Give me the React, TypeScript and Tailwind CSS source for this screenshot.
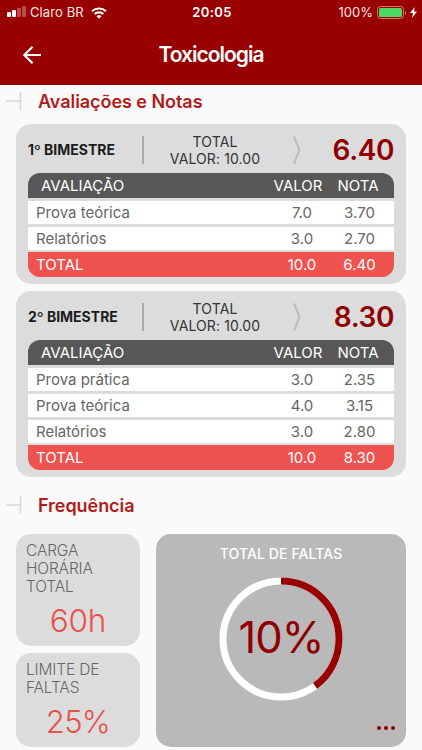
import clsx from "clsx";

type Grade = { name: string; value: string; grade: string };

type Term = {
  title: string;
  result: string;
  total: string;
  grades: Grade[];
};

const terms: Term[] = [
  {
    title: "1º BIMESTRE",
    result: "6.40",
    total: "10.0",
    grades: [
      { name: "Prova teórica", value: "7.0", grade: "3.70" },
      { name: "Relatórios", value: "3.0", grade: "2.70" },
    ],
  },
  {
    title: "2º BIMESTRE",
    result: "8.30",
    total: "10.0",
    grades: [
      { name: "Prova prática", value: "3.0", grade: "2.35" },
      { name: "Prova teórica", value: "4.0", grade: "3.15" },
      { name: "Relatórios", value: "3.0", grade: "2.80" },
    ],
  },
];

function StatusBar() {
  return (
    <div className="grid h-6 grid-cols-3 items-center pl-[7px] pr-[5px] pt-px text-[13px] text-white/90">
      <div className="flex items-center">
        <div className="mr-1 flex h-[9px] items-end gap-px">
          <span className="h-[5px] w-1 rounded-[1px] bg-white" />
          <span className="h-[7px] w-1 rounded-[1px] bg-white" />
          <span className="h-[9px] w-1 rounded-[1px] bg-white/30" />
          <span className="h-[11px] w-1 rounded-[1px] bg-white/30" />
        </div>
        <span className="tracking-[0.1px]">Claro BR</span>
        <svg className="ml-[7px]" width="16" height="12" viewBox="0 0 16 12" fill="none" stroke="white" strokeWidth="2.1">
          <path d="M1 4.3a10.2 10.2 0 0 1 14 0" />
          <path d="M3.6 7.1a6.5 6.5 0 0 1 8.8 0" />
          <path d="M8 11.8 5.5 9.2a3.7 3.7 0 0 1 5 0z" fill="white" stroke="none" />
        </svg>
      </div>
      <span className="text-center font-semibold tracking-[0.4px] text-white">20:05</span>
      <div className="flex items-center justify-end">
        <span>100%</span>
        <div className="ml-1 h-[13px] w-[27px] rounded-[3.5px] border border-[#cf7a68] p-px">
          <div className="h-full rounded-[1.5px] bg-[#4cd964]" />
        </div>
        <span className="ml-px h-1 w-px rounded-r bg-[#cf7a68]" />
        <svg className="ml-1" width="7" height="11" viewBox="0 0 7 11" fill="white">
          <path d="M4.7 0 0 6h3L2 11l5-6.5H4z" />
        </svg>
      </div>
    </div>
  );
}

function Header() {
  return (
    <header className="h-[85px] bg-[#990000]">
      <StatusBar />
      <div className="grid h-[61px] grid-cols-[60px_1fr_60px] items-center text-white">
        <svg className="ml-[23px]" width="19" height="18" viewBox="0 0 19 18" fill="none" stroke="white" strokeWidth="2.1">
          <path d="M9.6 .8 1.3 9l8.3 8.2M1.5 9H18" />
        </svg>
        <h1 className="text-center text-[21px] font-semibold tracking-[-1px]">Toxicologia</h1>
      </div>
    </header>
  );
}

function SectionTitle({ children }: { children: string }) {
  return (
    <div className="flex h-6 items-center">
      <svg className="ml-1.5 mr-4" width="16" height="18" viewBox="0 0 16 18" stroke="#d8d8d8" strokeWidth="1.5">
        <path d="M0 9h14.5M14.5 0v18" />
      </svg>
      <h2 className="text-[18px] font-semibold tracking-[-0.05px] text-[#b01c1c]">{children}</h2>
    </div>
  );
}

function Row({ cells, className }: { cells: string[]; className: string }) {
  return (
    <div className={clsx("grid items-center pt-px text-[15px]", className)}>
      <span>{cells[0]}</span>
      <span className="text-center">{cells[1]}</span>
      <span className="text-center">{cells[2]}</span>
    </div>
  );
}

function TermCard({ term }: { term: Term }) {
  return (
    <section className="rounded-[15px] bg-[#dcdcdc] px-3 pb-[7px]">
      <div className="flex h-[49px] items-center pt-[3px]">
        <h3 className="w-[114px] pb-0.5 text-[14px] font-bold text-[#1c1c1c]">{term.title}</h3>
        <div className="h-7 w-0.5 bg-[#aaaaaa]" />
        <p className="ml-[16px] w-[110px] pb-px text-center text-[14px] leading-[17px] tracking-[0.1px] text-[#333333]">
          TOTAL
          <br />
          VALOR: 10.00
        </p>
        <svg className="ml-[23px]" width="8" height="28" viewBox="0 0 8 28" fill="none" stroke="#bcbcbc" strokeWidth="2">
          <path d="M1 .5 6.5 14 1 27.5" />
        </svg>
        <strong className="ml-auto text-[28px] font-semibold tracking-[-0.4px] text-[#900000]">{term.result}</strong>
      </div>
      <div className="flex flex-col overflow-hidden rounded-[12px]">
        <Row
          cells={["AVALIAÇÃO", "VALOR", "NOTA"]}
          className="h-[25px] grid-cols-[1fr_50px_70px] bg-[#575757] pl-[13px] pr-px text-white"
        />
        <div className="flex flex-col gap-[3px] pb-0.5 pt-[3px]">
          {term.grades.map((g) => (
            <Row
              key={g.name}
              cells={[g.name, g.value, g.grade]}
              className="h-[23px] grid-cols-[1fr_46px_69px] bg-white pl-2 text-[#666666]"
            />
          ))}
        </div>
        <Row
          cells={["TOTAL", term.total, term.result]}
          className="h-[25px] grid-cols-[1fr_46px_69px] bg-[#ef5350] pl-2 text-white"
        />
      </div>
    </section>
  );
}

function AbsenceRing() {
  const radius = 58;
  return (
    <div className="relative size-[124px]">
      <svg className="size-full -rotate-90" viewBox="0 0 124 124" fill="none" strokeWidth="7">
        <circle cx="62" cy="62" r={radius} stroke="white" />
        <circle cx="62" cy="62" r={radius} stroke="#990000" pathLength="100" strokeDasharray="40 60" />
      </svg>
      <span className="absolute inset-0 flex items-center justify-center pb-[3px] text-[43.5px] tracking-[-1px] text-[#900000]">
        10%
      </span>
    </div>
  );
}

export default function App() {
  return (
    <div className="h-[750px] w-[422px] overflow-hidden bg-[#fafafa] font-['Inter',sans-serif]">
      <Header />
      <main className="pt-1">
        <SectionTitle>Avaliações e Notas</SectionTitle>
        <div className="mx-4 mt-[11px] flex flex-col gap-[7px]">
          {terms.map((term) => (
            <TermCard key={term.title} term={term} />
          ))}
        </div>

        <div className="mt-4">
          <SectionTitle>Frequência</SectionTitle>
        </div>
        <div className="mx-4 mt-[17px] grid h-[213px] grid-cols-[124px_1fr] gap-4">
          <div className="flex flex-col gap-[7px] text-[15.5px] font-light leading-[18px] tracking-[-0.15px] text-[#666666]">
            <div className="h-28 rounded-[15px] bg-[#dcdcdc] pl-2.5 pt-2">
              <p>CARGA<br />HORÁRIA<br />TOTAL</p>
              <p className="mt-1.5 pr-2.5 text-center text-[31.5px] leading-[38px] text-[#e8504d]">60h</p>
            </div>
            <div className="h-[94px] rounded-[15px] bg-[#dcdcdc] pl-2.5 pt-2">
              <p>LIMITE DE<br />FALTAS</p>
              <p className="mt-1.5 pr-2.5 text-center text-[31px] leading-[38px] tracking-[-0.7px] text-[#e8504d]">25%</p>
            </div>
          </div>
          <div className="flex flex-col items-center rounded-[15px] bg-[#b9b9b9] pt-2.5">
            <p className="text-[14px] font-medium leading-5 tracking-[0.1px] text-white">TOTAL DE FALTAS</p>
            <div className="mt-[13px]">
              <AbsenceRing />
            </div>
            <div className="mr-[11px] mt-[25px] flex gap-[3px] self-end">
              <span className="size-1 rounded-full bg-[#900000]" />
              <span className="size-1 rounded-full bg-[#900000]" />
              <span className="size-1 rounded-full bg-[#900000]" />
            </div>
          </div>
        </div>
      </main>
    </div>
  );
}
